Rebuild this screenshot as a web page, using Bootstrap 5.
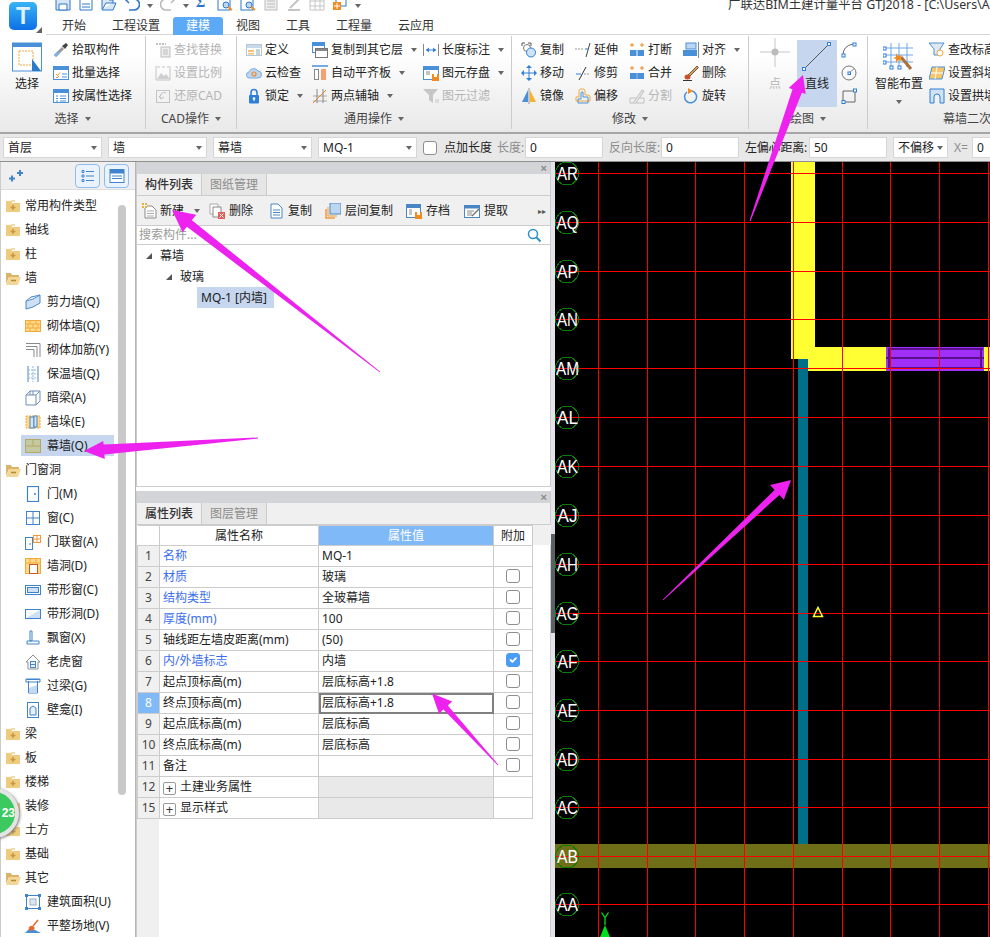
<!DOCTYPE html>
<html lang="zh-CN">
<head>
<meta charset="utf-8">
<title>广联达BIM土建计量平台 GTJ2018</title>
<link href="https://cdn.jsdelivr.net/npm/bootstrap@5.3.0/dist/css/bootstrap.min.css" rel="stylesheet">
<style>
html,body{width:990px;height:937px;overflow:hidden;margin:0;background:#fff}
body{position:relative;font:12px/16px "Noto Sans","Noto Sans CJK SC",sans-serif;color:#222}
.ic{width:16px;height:16px;flex:none;display:block}
.cdn{display:inline-block;width:0;height:0;border-left:3.5px solid transparent;border-right:3.5px solid transparent;border-top:4px solid #666;flex:none}
.gray{color:#b5b5b5}.dim{color:#8d8d8d}
/* title + tabs */
.topbar{height:35px;border-bottom:1px solid #d8d8d8}
.logo-cell{width:46px;height:35px;position:relative;background:#fff;flex:none}
.logo-cell::after{content:"";position:absolute;right:4px;bottom:2px;border:3px solid transparent;border-right-color:#666;border-bottom-color:#666}
.logo-box{width:28px;height:28px;margin:2px 0 0 9px;border-radius:5px;background:linear-gradient(#38b4f5,#0d6fe6);color:#dff1ff;font:bold 23px/28px "Liberation Sans",sans-serif;text-align:center}
.qat{height:11px;overflow:hidden;padding-left:9px;gap:7px}
.qat .ic{margin-top:-5px}
.qat-s{font:bold 14px/6px "Liberation Serif",serif;color:#2a72c8;width:14px}
.app-title{position:absolute;left:728px;top:-3px;white-space:nowrap;font-size:12.4px;color:#333}
.tabsrow{height:18px;margin-top:6px;margin-left:3px}
.rtab{padding:0 13px;line-height:18px;color:#333}
.rtab.on{background:#5caaf7;color:#fff;border-radius:3px 3px 0 0}
/* ribbon */
.ribbon{height:97px;background:linear-gradient(#fff 20%,#f3f3f3 60%,#e9e9e9);overflow:hidden}
.rg{flex:none;height:93px;margin-top:1px;border-right:1px solid #ccc;display:flex;flex-direction:column}
.rg-b{height:73px;flex:none;padding-top:2px;display:flex}
.rg-l{height:20px;flex:none;line-height:20px;display:flex;justify-content:center;align-items:center;gap:6px;color:#444}
.rcol{display:flex;flex-direction:column;flex:none}
.ri{height:23px;display:flex;align-items:center;gap:3px;white-space:nowrap}
.ri .cdn{margin-left:5px}
.big{display:flex;flex-direction:column;align-items:center;flex:none;height:68px}
.big svg{flex:none}
.big span{line-height:16px;white-space:nowrap}
.big.on-btn{background:#c5d6ee;margin-top:2px;height:67px}
.g1{width:146px}.g1>.rg-b{padding-left:11px}
.g2{width:91px}.g2>.rg-b{padding-left:9px}
.g3{width:275px}.g3>.rg-b{padding-left:9px}
.g4{width:237px}.g4>.rg-b{padding-left:9px}
.g5{width:119px}.g5>.rg-b{padding-left:11px}
.g6{width:234px;border:0}.g6>.rg-b{padding-left:7px}
.w32{width:32px}.w30{width:30px}.w40{width:40px}.w48{width:48px}
.m10{margin-left:10px}.m7{margin-left:7px}.m4{margin-left:4px}.m6{margin-left:6px}
.w66{width:66px}.w111{width:111px}.w54{width:54px}
.t2{margin-top:2px}
/* field bar */
.fieldbar{height:30px;background:#e8e8e8;border-top:2px solid #a6a6a6;border-bottom:1px solid #8f8f8f;padding-left:3px;overflow:hidden}
.fieldbar>span{flex:none;white-space:nowrap}
.form-control.fld{width:99px;height:21px;flex:none;padding:0 4px;font-size:12px;line-height:19px;border:1px solid #d6d6d6;border-radius:0;color:#222;background:#fff;min-height:0}
.fld.w78{width:78px}.fld.w55{width:55px}
.mr6{margin-right:6px}
.lab1{width:48px;margin-left:7px;margin-right:5px}
.lab2{width:28px}.lab3{width:52px}.lab4{width:64px;letter-spacing:-.2px}.lab5{width:18px}
.form-check-input.ck{width:14px;height:14px;margin:0;flex:none;border:1px solid #8e8e8e;border-radius:3px;background-color:#fff;opacity:1}
.form-check-input.ck:checked{background-color:#4a9cf5;border-color:#4a9cf5}
/* main */
.mainrow{height:775px}
.leftp{width:136px;flex:none;border-left:1px solid #ccc;border-right:1px solid #b5b5b5;position:relative}
.left-hd{height:28px;background:#efefef;border-bottom:1px solid #ddd;padding:1px 6px 0 6px}
.sq{width:25px;height:24px;border:1px solid #8dbdf0;border-radius:4px;background:#eaf3fd;display:flex;align-items:center;justify-content:center}
.tree{width:117px;padding-top:4px;overflow:hidden}
.tr0{height:24px;display:flex;align-items:center;gap:4px;padding-left:4px;white-space:nowrap}
.tr1{height:24px;display:flex;align-items:center;gap:6px;padding-left:24px;white-space:nowrap}
.tr1.sel{height:21px;margin:1px 0 2px 20px;padding-left:4px;width:93px;background:#c5d6ee}
.vscroll{width:8px;height:590px;margin-top:15px;background:#c9c9c9;border-radius:4px;flex:none}
.badge23{position:absolute;left:-32px;top:626px;width:50px;height:50px;border-radius:50%;background:#3cc95f;border:4px solid #e4e4e4;box-shadow:1px 1px 3px #777;color:#fff;font:bold 12px/42px "Liberation Sans",sans-serif;text-align:right;padding-right:0}
.midp{width:415px;flex:none}
.pn{border-left:1px solid #ccc;border-right:1px solid #ccc;background:#fff}
.pn-up{height:325px;border-bottom:1px solid #ccc;margin-bottom:4px}
.pn-dn{flex:1 1 auto;min-height:0}
.pn-x{height:12px;background:#d3d4d8;color:#888;font:bold 11px/12px "Liberation Sans",sans-serif;text-align:right;padding-right:3px;flex:none}
.ptabs{height:22px;background:#f0f0f0;border-bottom:1px solid #ccc;flex:none}
.ptab-i{width:65px;text-align:center;line-height:21px;font-weight:500;color:#333;background:#f0f0f0;border-right:1px solid #ccc}
.ptab-i.off{color:#8c8c8c;background:#e6e6e6;font-weight:400;width:65px}
.ptools{height:30px;background:#f0f0f0;border-bottom:1px solid #ccc;padding-left:5px;flex:none;position:relative}
.pt{display:flex;align-items:center;gap:4px;white-space:nowrap;flex:none}
.g2px{gap:2px}
.w67{width:67px}.w59{width:59px}.w57{width:57px}.w81{width:81px}.w58{width:58px}
.more{font-size:8px;color:#555}
.srch{height:19px;border-bottom:1px solid #ccc;padding:0 8px 0 2px;color:#9a9a9a;flex:none}
.pt-r{height:21px;display:flex;align-items:center;white-space:nowrap}
.p9{padding-left:9px}.p29{padding-left:29px}
.tri{width:0;height:0;border-left:6px solid transparent;border-bottom:6px solid #555;flex:none}
.pt-sel{margin-left:60px;padding:0 4px;width:77px;height:21px;line-height:21px;background:#c5d6ee}
.ptab.table{width:395px;margin:0;table-layout:fixed;--bs-table-border-color:#ccc;--bs-table-bg:transparent;font-size:12px;flex:none}
.ptab.table>:not(caption)>*>*{padding:0 3px;height:21px;line-height:16px;vertical-align:middle;color:#222;white-space:nowrap;box-shadow:none}
.ptab.table>thead>*>*{height:20px;text-align:center;border-top:0}
.ptab.table>*>*>.n{background:#f0f0f0;text-align:center;padding:0;color:#444}
.ptab.table>*>*>.n.act,.ptab.table>thead>*>.hv{background:#7fb9f8;color:#fff}
.ptab.table>*>*>.bl{color:#3b6ef0}
.ptab.table>*>*>.gr{background:#e9e9e9}
.ptab.table>*>*>.cur{outline:2px solid #808080;outline-offset:-2px}
.ptab.table>*>*>.ctr{text-align:center;padding:0}
.ptab.table>thead>*>.emp{border:0;background:#fff}
.cw1{width:22px}.cw2{width:159px}.cw3{width:175px}.cw4{width:39px}
.plus{display:inline-block;width:13px;height:13px;border:1px solid #999;border-radius:2px;line-height:10px;text-align:center;margin-right:4px;vertical-align:-2px;font-size:13px;color:#333}
.hd-strip{width:18px;height:20px;background:#f0f0f0;flex:none}
.gutter{width:22px;background:#f0f0f0;flex:1 1 auto}
.split{width:4px;flex:none;background:#e3e3e9;position:relative}
.split-h{position:absolute;left:0;top:372px;width:4px;height:99px;background:#5c6067}
.canvasw{width:435px;flex:none;background:#000}
.canvasw svg{display:block}
.cad-t{font:18px "Liberation Sans",sans-serif;fill:#fff}
.over{position:absolute;left:0;top:0;width:990px;height:937px;pointer-events:none}
</style>
</head>
<body>
<svg class="d-none" xmlns="http://www.w3.org/2000/svg">
<symbol id="i-save" viewBox="0 0 16 16"><path d="M1 1h12l2 2v12H1z" fill="#d7e6f7" stroke="#2f78c8"/><path d="M4 9h8v6H4z" fill="#fff" stroke="#2f78c8"/></symbol>
<symbol id="i-doc" viewBox="0 0 16 16"><path d="M2 1h8l4 4v10H2z" fill="#fff" stroke="#2f78c8"/><path d="M4 9h8M4 12h8" stroke="#2f78c8"/></symbol>
<symbol id="i-open" viewBox="0 0 16 16"><path d="M1 14V3h5l2 2h4v3H5l-4 7h11l3-7H12" fill="#d7e6f7" stroke="#2f78c8"/></symbol>
<symbol id="i-undo" viewBox="0 0 16 16"><path d="M5 8 1 4l4-4M1 4h9a5 5 0 0 1 0 11H5" fill="none" stroke="#2f78c8" stroke-width="1.6"/></symbol>
<symbol id="i-redo" viewBox="0 0 16 16"><path d="M11 8l4-4-4-4M15 4H6a5 5 0 0 0 0 11h5" fill="none" stroke="#bbb" stroke-width="1.6"/></symbol>
<symbol id="i-plan" viewBox="0 0 16 16"><rect x="1" y="1" width="12" height="14" fill="#fff" stroke="#2f78c8"/><circle cx="9" cy="10" r="3" fill="#bcd6f2" stroke="#2f78c8"/><path d="M11 12l4 3" stroke="#f09020" stroke-width="2"/></symbol>
<symbol id="i-gplan" viewBox="0 0 16 16"><rect x="2" y="1" width="12" height="14" fill="#eee" stroke="#bbb"/><path d="M4 6h8M4 9h8M4 12h8" stroke="#bbb"/></symbol>
<symbol id="i-gpen" viewBox="0 0 16 16"><path d="M2 15h12M4 13 13 4" stroke="#c4c4c4" stroke-width="2"/></symbol>
<symbol id="i-ggrid" viewBox="0 0 16 16"><path d="M1 1h14v14H1zM6 1v14M11 1v14M1 6h14M1 11h14" fill="none" stroke="#c4c4c4"/></symbol>
<symbol id="i-qadd" viewBox="0 0 16 16"><rect x="4" y="1" width="10" height="10" fill="#fff" stroke="#2f78c8"/><rect x="1" y="7" width="8" height="8" fill="#f28a1e"/><path d="M5 8v6M2 11h6" stroke="#fff"/></symbol>
<symbol id="i-pick" viewBox="0 0 16 16"><path d="M2 14 10 6" stroke="#999" stroke-width="3"/><path d="M2 14 6 10" stroke="#7cb0e6" stroke-width="3"/><path d="M9 4l3 3 3-4-2-2z" fill="#444"/></symbol>
<symbol id="i-batch" viewBox="0 0 16 16"><rect x=".5" y="1.500" width="15" height="13" fill="#fff" stroke="#4a90d9"/><rect x="1" y="2" width="14" height="3" fill="#4a90d9"/><path d="M3 9l1.500 1.500L7 7.500M3 12l1 1 2-2" fill="none" stroke="#f09020"/><path d="M9 9h5M9 12h5" stroke="#4a90d9"/></symbol>
<symbol id="i-attr" viewBox="0 0 16 16"><rect x=".5" y="1.500" width="15" height="13" fill="#fff" stroke="#4a90d9"/><rect x="1" y="2" width="14" height="3" fill="#4a90d9"/><path d="M3 8h2M3 10.500h2M3 13h2M7 8h6M7 10.500h6M7 13h6" stroke="#4a90d9"/></symbol>
<symbol id="i-find" viewBox="0 0 16 16"><path d="M1 2h10" stroke="#c0c0c0" stroke-dasharray="2 1" stroke-width="2"/><rect x="6" y="5" width="9" height="10" fill="#eee" stroke="#bdbdbd"/><path d="M8 8h5M8 10h5M8 12h5" stroke="#bdbdbd"/></symbol>
<symbol id="i-scale" viewBox="0 0 16 16"><path d="M1 1v14h14V1" fill="none" stroke="#c4c4c4"/><path d="M2 14l4-6 3 3 2-2 4 5z" fill="#cfcfcf"/><path d="M2 2h3M7 2h3M12 2h2" stroke="#c4c4c4"/></symbol>
<symbol id="i-back" viewBox="0 0 16 16"><rect x="1.500" y="2.500" width="13" height="12" fill="none" stroke="#c4c4c4"/><path d="M11 5a4 4 0 0 0-5 6M4 8l2 3 3-2" fill="none" stroke="#bdbdbd"/></symbol>
<symbol id="i-def" viewBox="0 0 16 16"><rect x=".5" y="2.500" width="15" height="11" fill="#fff" stroke="#b8c6d6"/><rect x="1" y="3" width="14" height="3" fill="#c9d9ec"/><path d="M2 8h6v2H2zM2 11h6v1.500H2z" fill="#f7c074"/><path d="M10 8h4M10 10h4M10 12h4" stroke="#8aa"/></symbol>
<symbol id="i-cloud" viewBox="0 0 16 16"><path d="M4 13a3 3 0 0 1-1-6 5 5 0 0 1 9-1 3.500 3.500 0 0 1 0 7z" fill="#bcd6f2" stroke="#7aa9da"/><circle cx="8" cy="9" r="2" fill="none" stroke="#ef8a22" stroke-width="1.200"/></symbol>
<symbol id="i-lock" viewBox="0 0 16 16"><path d="M5 7V4.500a3 3 0 0 1 6 0V7" fill="none" stroke="#2f7fd6" stroke-width="1.600"/><rect x="3" y="7" width="10" height="8.500" rx="1" fill="#2f7fd6"/><circle cx="8" cy="10.500" r="1.300" fill="#fff"/><path d="M8 11v2" stroke="#fff"/></symbol>
<symbol id="i-copyfl" viewBox="0 0 16 16"><rect x=".5" y=".5" width="12" height="10" fill="#fff" stroke="#4a90d9"/><rect x="1" y="1" width="11" height="3" fill="#4a90d9"/><rect x="3.500" y="6.500" width="12" height="9" fill="#fff" stroke="#777"/><rect x="4" y="7" width="11" height="2" fill="#888"/></symbol>
<symbol id="i-auto" viewBox="0 0 16 16"><path d="M0 1h16" stroke="#4a90d9" stroke-width="1.500"/><rect x="2.500" y="4.500" width="4" height="10" fill="#fff" stroke="#888"/><rect x="9" y="4" width="5" height="11" fill="#f6a070"/></symbol>
<symbol id="i-two" viewBox="0 0 16 16"><path d="M1 8h14M1 13h14" stroke="#aaa"/><path d="M1 15 14 2" stroke="#ef8a22"/><path d="M5 1v14M11 1v14" stroke="#888"/></symbol>
<symbol id="i-dim" viewBox="0 0 16 16"><path d="M.5 2v12M15.500 2v12" stroke="#888"/><path d="M3 8h10" stroke="#2f7fd6"/><path d="M3 8l3-2.500v5zM13 8l-3-2.500v5z" fill="#2f7fd6"/></symbol>
<symbol id="i-store" viewBox="0 0 16 16"><rect x=".5" y="1.500" width="15" height="13" fill="#fff" stroke="#4a90d9"/><rect x="1" y="2" width="14" height="3" fill="#4a90d9"/><path d="M3 7h4M3 9h4" stroke="#888"/><rect x="9" y="9" width="7" height="7" fill="#f28a1e"/><rect x="11" y="9" width="3" height="3" fill="#fff"/></symbol>
<symbol id="i-filter" viewBox="0 0 16 16"><path d="M0 1h15l-5 6v8l-4-3V7z" fill="#c6c6c6"/><path d="M12 12h4M12 14h4" stroke="#c6c6c6"/></symbol>
<symbol id="i-copy" viewBox="0 0 16 16"><path d="M1 4V1h3M7 1h3v3" fill="none" stroke="#555"/><circle cx="6" cy="6" r="3.500" fill="#fff" stroke="#777"/><circle cx="10" cy="10.500" r="4.500" fill="#cfe2f6" stroke="#2f7fd6"/></symbol>
<symbol id="i-move" viewBox="0 0 16 16"><path d="M8 3v10M3 8h10" stroke="#2f7fd6"/><path d="M8 0l3 3H5zM8 16l3-3H5zM0 8l3-3v6zM16 8l-3-3v6z" fill="#2f7fd6"/></symbol>
<symbol id="i-mirror" viewBox="0 0 16 16"><path d="M7 2v12H1z" fill="#4a90d9"/><path d="M9 2v12h6z" fill="#f7b32b"/><path d="M8 0v16" stroke="#999"/></symbol>
<symbol id="i-extend" viewBox="0 0 16 16"><path d="M0 7h9" stroke="#999" stroke-dasharray="2 1"/><path d="M10 7h3" stroke="#2f7fd6"/><path d="M11 15 15 1" stroke="#444"/></symbol>
<symbol id="i-trim" viewBox="0 0 16 16"><path d="M1 9h5" stroke="#2f7fd6"/><path d="M9 9h6" stroke="#999" stroke-dasharray="2 1"/><path d="M4 15 11 2" stroke="#333"/></symbol>
<symbol id="i-offset" viewBox="0 0 16 16"><path d="M1 13V9h3V3a2 2 0 0 1 2-2h2a2 2 0 0 1 2 2v4h3a2 2 0 0 1 2 2v4z" fill="none" stroke="#f2a93b"/><path d="M3 15v-4h3V5a1 1 0 0 1 1-1h1v5h5v6z" fill="none" stroke="#4a90d9"/></symbol>
<symbol id="i-break" viewBox="0 0 16 16"><rect x="1" y="8" width="6.500" height="6" fill="#4a90d9"/><rect x="8.500" y="8" width="6.500" height="6" fill="#4a90d9"/><path d="M1 3h4M3 1v4M11 3h4M13 1v4" stroke="#f28a1e"/></symbol>
<symbol id="i-merge" viewBox="0 0 16 16"><rect x="1" y="8" width="14" height="6" fill="#4a90d9"/><path d="M8 8v6" stroke="#8ebceb"/><path d="M1 3h4M3 1v4M11 3h4M13 1v4" stroke="#f28a1e"/></symbol>
<symbol id="i-split" viewBox="0 0 16 16"><path d="M1 10h14v5H1z" fill="none" stroke="#c0c0c0"/><path d="M4 15 13 2l2 1-8 12" fill="#e4e4e4" stroke="#c0c0c0"/></symbol>
<symbol id="i-align" viewBox="0 0 16 16"><rect x="3" y="1" width="10" height="6" fill="#bcd6f2" stroke="#4a90d9"/><rect x="0" y="8" width="14" height="6" fill="#4a90d9"/><path d="M15.500 0v16" stroke="#888"/></symbol>
<symbol id="i-del" viewBox="0 0 16 16"><path d="M5 10 14 1l1.500 1.500-9 9z" fill="#c8a06a" stroke="#7d5a2c"/><ellipse cx="4.500" cy="12" rx="3" ry="2.500" fill="#c8502a"/><path d="M0 15.500h9" stroke="#333"/></symbol>
<symbol id="i-rot" viewBox="0 0 16 16"><path d="M9 3a6 6 0 1 1-5 1" fill="none" stroke="#4a90d9" stroke-width="1.500"/><path d="M5 0l5 3-5 3z" fill="#f28a1e"/></symbol>
<symbol id="i-point" viewBox="0 0 30 30"><path d="M0 14h12M18 14h12M15 0v11M15 17v12" stroke="#c6c6c6"/><circle cx="15" cy="14" r="3.500" fill="#bbb"/></symbol>
<symbol id="i-line" viewBox="0 0 30 30"><path d="M2 27 27 2" stroke="#555"/><rect x=".5" y="25.500" width="3" height="3" fill="#fff" stroke="#2f7fd6"/><rect x="25.500" y=".5" width="3" height="3" fill="#fff" stroke="#2f7fd6"/></symbol>
<symbol id="i-arc" viewBox="0 0 16 16"><path d="M2 13Q2 4 12 2" fill="none" stroke="#666"/><rect x="1" y="12" width="3" height="3" fill="#fff" stroke="#2f7fd6"/><rect x="12" y="1" width="3" height="3" fill="#fff" stroke="#2f7fd6"/></symbol>
<symbol id="i-circ" viewBox="0 0 16 16"><circle cx="8" cy="8" r="7" fill="none" stroke="#777"/><rect x="7" y="7" width="2.500" height="2.500" fill="#fff" stroke="#2f7fd6"/><path d="M9 7l4-3" stroke="#999"/></symbol>
<symbol id="i-rect" viewBox="0 0 16 16"><path d="M2 3h12v11H2z" fill="none" stroke="#666"/><rect x="1" y="12.500" width="3" height="3" fill="#fff" stroke="#2f7fd6"/><rect x="12.500" y="1" width="3" height="3" fill="#fff" stroke="#2f7fd6"/></symbol>
<symbol id="i-smart" viewBox="0 0 32 32"><path d="M8 1v24M16 1v24M24 1v24M1 6h29M1 13h29M1 20h29" stroke="#6ea6e2"/><g fill="#fff" stroke="#2f7fd6"><rect x="0" y="5" width="3" height="3"/><rect x="0" y="12" width="3" height="3"/><rect x="0" y="19" width="3" height="3"/><rect x="7" y="24" width="3" height="3"/><rect x="15" y="24" width="3" height="3"/></g><path d="M18 15 28 27" stroke="#a9713b" stroke-width="3"/><path d="M13 11l2 3 4-1-2 3 2 3-4-1-2 3v-4l-3-1 3-1z" fill="#f28a1e"/></symbol>
<symbol id="i-modh" viewBox="0 0 16 16"><path d="M0 1h15l-4 6v6H5V7z" fill="#e0e7ef" stroke="#4a90d9"/><circle cx="11" cy="11" r="3" fill="#fff" stroke="#f2a93b"/></symbol>
<symbol id="i-slope" viewBox="0 0 16 16"><path d="M3 2h13l-3 12H0z" fill="#f7c668" stroke="#4a90d9"/><path d="M2 8h12M8 2 6 14" stroke="#fff"/></symbol>
<symbol id="i-arch" viewBox="0 0 16 16"><path d="M1 1h14v14h-4V9a3 3 0 0 0-6 0v6H1z" fill="#cfe2f6" stroke="#2f7fd6"/></symbol>
<symbol id="i-spark" viewBox="0 0 16 16"><path d="M2 10.500h6M5 7.500v6M10 5h6M13 2v6" stroke="#3f83cc" stroke-width="2"/></symbol>
<symbol id="i-fold" viewBox="0 0 16 16"><path d="M1 3h5l1 2h8v9H1z" fill="#eecb7e"/><rect x="6" y="2" width="4" height="2" fill="#f5dca6"/><path d="M8 7v5M5.500 9.500h5" stroke="#c69a3e" stroke-width="1.500"/></symbol>
<symbol id="i-foldo" viewBox="0 0 16 16"><path d="M1 3h5l1 2h7v2H4L1 14z" fill="#d9b56a"/><path d="M4 7h12l-3 8H1z" fill="#f2d798"/><path d="M6 10.500h5" stroke="#b58b37" stroke-width="1.500"/></symbol>
<symbol id="i-shear" viewBox="0 0 16 16"><path d="M1 7Q8 6 15 1v8Q8 14 1 15z" fill="#cfe0f4" stroke="#4a86c6"/><path d="M1 7 6 3q5-1 9-2" fill="#eef4fb" stroke="#4a86c6"/></symbol>
<symbol id="i-brick" viewBox="0 0 16 16"><rect x=".5" y="2.500" width="15" height="11" fill="#ffd98a" stroke="#f2a93b"/><path d="M1 6h14M1 10h14M5 3v3M11 3v3M8 6v4M3 6v4M13 6v4M5 10v3M11 10v3" stroke="#f2a93b"/></symbol>
<symbol id="i-rebar" viewBox="0 0 16 16"><path d="M1 1.500h14V15M1 4.500h11V15M1 7.500h8V15" fill="none" stroke="#8a8a8a"/></symbol>
<symbol id="i-insul" viewBox="0 0 16 16"><path d="M3 0v16M13 0v16" stroke="#4a86c6"/><path d="M8 0v16M3 4h10M3 8h10M3 12h10" stroke="#8db4dd" stroke-dasharray="2 1"/></symbol>
<symbol id="i-beam" viewBox="0 0 16 16"><path d="M1 5 5 1h10v10l-4 4H1z" fill="#fff" stroke="#6f8fb4"/><path d="M1 5h10v10M11 5l4-4M5 1v4M8 1v4" fill="none" stroke="#6f8fb4"/></symbol>
<symbol id="i-pier" viewBox="0 0 16 16"><rect x="1" y="2" width="14" height="12" fill="#ffd98a" stroke="#f2a93b" stroke-dasharray="2 1"/><rect x="5" y="3" width="4" height="11" fill="#d6e4f4" stroke="#4a86c6"/><rect x="9" y="2" width="3" height="11" fill="#d6e4f4" stroke="#4a86c6"/></symbol>
<symbol id="i-curt" viewBox="0 0 16 16"><rect x=".5" y="1.500" width="15" height="13" fill="#c4c9a2" stroke="#b7a765"/><path d="M8 2v6M1 8h14" stroke="#b7a765"/></symbol>
<symbol id="i-door" viewBox="0 0 16 16"><rect x="2.500" y=".5" width="11" height="15" fill="#fff" stroke="#3f83cc" stroke-width="1.200"/><path d="M10 7v2" stroke="#3f83cc" stroke-width="1.500"/></symbol>
<symbol id="i-wind" viewBox="0 0 16 16"><rect x="1.500" y="1.500" width="13" height="13" fill="#fff" stroke="#3f83cc"/><path d="M8 2v12M2 8h12" stroke="#3f83cc"/></symbol>
<symbol id="i-dwin" viewBox="0 0 16 16"><rect x=".5" y="3.500" width="7" height="12" fill="#fff" stroke="#3f83cc"/><rect x="8.500" y="1.500" width="7" height="7" fill="#fff" stroke="#f09a3a"/><path d="M5 9v2" stroke="#3f83cc"/><path d="M12 2v6M9 5h6" stroke="#f09a3a"/></symbol>
<symbol id="i-hole" viewBox="0 0 16 16"><rect x=".5" y=".5" width="15" height="15" fill="#ffd98a" stroke="#f2a93b"/><path d="M1 5h14M5 1v4M11 1v4" stroke="#f2a93b"/><rect x="4.500" y="6.500" width="8" height="9" fill="#fff" stroke="#c05a2c"/></symbol>
<symbol id="i-strip" viewBox="0 0 16 16"><rect x=".5" y="3.500" width="15" height="9" fill="#fff" stroke="#3f83cc"/><rect x="2.500" y="5.500" width="11" height="5" fill="#cfe0f4" stroke="#3f83cc"/></symbol>
<symbol id="i-striph" viewBox="0 0 16 16"><rect x=".5" y="3.500" width="15" height="9" fill="#fff" stroke="#3f83cc"/><path d="M1 12 15 4v8z" fill="#cfe0f4"/></symbol>
<symbol id="i-bay" viewBox="0 0 16 16"><path d="M5 1h2v10H5zM2 11h12v3H2z" fill="#fff" stroke="#3f83cc"/></symbol>
<symbol id="i-dorm" viewBox="0 0 16 16"><path d="M8 1 1 8h2v7h10V8h2z" fill="#fff" stroke="#8a8f94"/><rect x="5.500" y="7.500" width="5" height="6" fill="#e6eff9" stroke="#4a86c6"/><path d="M6 10.500h4" stroke="#4a86c6"/></symbol>
<symbol id="i-lint" viewBox="0 0 16 16"><path d="M1.500 1.500h13M3.500 3v12h9V3" fill="#fff" stroke="#3f83cc"/><path d="M1 1h14v3H1z" fill="none" stroke="#3f83cc"/><path d="M4 15V10l8-3v8z" fill="#c4d8ee"/></symbol>
<symbol id="i-niche" viewBox="0 0 16 16"><rect x="2.500" y=".5" width="11" height="15" fill="#fff" stroke="#3f83cc"/><path d="M5 13V6l3-2 3 2v7z" fill="#e6eff9" stroke="#3f83cc"/></symbol>
<symbol id="i-area" viewBox="0 0 16 16"><rect x="1.500" y="1.500" width="13" height="13" fill="#fff" stroke="#3f83cc"/><rect x="5" y="5" width="6" height="6" fill="#dde6f0" stroke="#9db1c7"/><g fill="#3f83cc"><rect x="0" y="0" width="3" height="3"/><rect x="13" y="0" width="3" height="3"/><rect x="0" y="13" width="3" height="3"/><rect x="13" y="13" width="3" height="3"/></g></symbol>
<symbol id="i-grade" viewBox="0 0 16 16"><path d="M0 15 5 10l5 2 6 3z" fill="#4a8ed6"/><path d="M4 12a3 3 0 0 1 4-4l2 2-3 3z" fill="#e8672a"/><path d="M8 8 13 2" stroke="#e8672a" stroke-width="1.500"/></symbol>
<symbol id="i-new" viewBox="0 0 16 16"><path d="M3 3h7l4 4v8H3z" fill="#fff" stroke="#8a8a8a"/><path d="M5 8h7M5 10.500h7M5 13h7" stroke="#aaa"/><rect x="0" y="0" width="5" height="5" fill="#f2a93b"/><path d="M0 2.500h5M2.500 0v5" stroke="#fff"/></symbol>
<symbol id="i-rem" viewBox="0 0 16 16"><path d="M1 1h8v10H1z" fill="#fff" stroke="#aaa"/><path d="M4 4h8v10H4z" fill="#fff" stroke="#888"/><rect x="9" y="9" width="7" height="7" fill="#e25d58"/><path d="M10.500 10.500l4 4M14.500 10.500l-4 4" stroke="#fff"/></symbol>
<symbol id="i-dup" viewBox="0 0 16 16"><path d="M3 1h7l4 4v10H3z" fill="#fff" stroke="#4a86c6"/><path d="M5 7h7M5 9.500h7M5 12h7" stroke="#4a86c6"/></symbol>
<symbol id="i-layer" viewBox="0 0 16 16"><path d="M1 6v9h9" fill="none" stroke="#f09a3a" stroke-width="1.500"/><path d="M3 4v9h9" fill="none" stroke="#f09a3a"/><rect x="5" y="0" width="11" height="11" fill="#bcd6f2" stroke="#4a86c6"/></symbol>
<symbol id="i-arch2" viewBox="0 0 16 16"><rect x=".5" y="1.500" width="14" height="13" fill="#fff" stroke="#4a86c6"/><rect x="1" y="2" width="13" height="3" fill="#4a86c6"/><path d="M3 7h3M3 9h3M3 11h3" stroke="#8a8a8a"/><rect x="9" y="9" width="7" height="7" fill="#f28a1e"/><rect x="11" y="9" width="3" height="3" fill="#fff"/></symbol>
<symbol id="i-extr" viewBox="0 0 16 16"><rect x=".5" y="2.500" width="15" height="12" fill="#fff" stroke="#4a86c6"/><rect x="1" y="3" width="14" height="2.500" fill="#4a86c6"/><path d="M3 8h7M3 10h5M3 12h5" stroke="#8a8a8a"/><path d="M8 13 15 6" stroke="#777" stroke-width="1.500"/></symbol>
<symbol id="i-mag" viewBox="0 0 16 16"><circle cx="7" cy="7" r="4.500" fill="none" stroke="#2f8fc8" stroke-width="1.500"/><path d="M10.500 10.500l4 4" stroke="#2f8fc8" stroke-width="2"/></symbol>
<symbol id="i-list" viewBox="0 0 16 16"><path d="M2 2.500h2v2H2zM2 7h2v2H2zM2 11.500h2v2H2zM6 3.500h8M6 8h8M6 12.500h8" fill="none" stroke="#3f83cc"/></symbol>
<symbol id="i-panel" viewBox="0 0 16 16"><rect x="1" y="1.500" width="14" height="13" fill="#fff" stroke="#3f83cc"/><rect x="1" y="1.500" width="14" height="4" fill="#3f83cc"/><path d="M3 8h10M3 10.500h10" stroke="#3f83cc"/></symbol>
</svg>

<div class="topbar d-flex">
  <div class="logo-cell"><div class="logo-box">T</div></div>
  <div class="flex-grow-1">
    <div class="qat d-flex">
      <svg class="ic"><use href="#i-save"/></svg><svg class="ic"><use href="#i-doc"/></svg><svg class="ic"><use href="#i-open"/></svg><svg class="ic"><use href="#i-undo"/></svg><span class="cdn mt-1"></span><svg class="ic"><use href="#i-redo"/></svg><span class="cdn mt-1"></span><span class="qat-s">Σ</span><svg class="ic"><use href="#i-plan"/></svg><svg class="ic"><use href="#i-plan"/></svg><svg class="ic"><use href="#i-gplan"/></svg><svg class="ic"><use href="#i-gpen"/></svg><svg class="ic"><use href="#i-ggrid"/></svg><svg class="ic"><use href="#i-qadd"/></svg><span class="cdn mt-1"></span>
    </div>
    <div class="tabsrow d-flex">
      <div class="rtab">开始</div><div class="rtab">工程设置</div><div class="rtab on">建模</div><div class="rtab">视图</div><div class="rtab">工具</div><div class="rtab">工程量</div><div class="rtab">云应用</div>
    </div>
  </div>
  <div class="app-title">广联达BIM土建计量平台 GTJ2018 - [C:\Users\A</div>
</div>

<div class="ribbon d-flex">
  <div class="rg g1">
    <div class="rg-b">
      <div class="big w32"><svg width="30" height="30" viewBox="0 0 30 30" class="mt-1"><rect x=".5" y="1" width="29" height="28" fill="#fff" stroke="#4a90d9"/><rect x="1" y="1" width="28" height="4" fill="#4a90d9"/><path d="M7 9h14v14H7z" fill="none" stroke="#f2a93b" stroke-dasharray="2 1"/><path d="M20 17v12h9z" fill="#2b7bc8"/></svg><span class="mt-1">选择</span></div>
      <div class="rcol m10">
        <div class="ri"><svg class="ic"><use href="#i-pick"/></svg>拾取构件</div>
        <div class="ri"><svg class="ic"><use href="#i-batch"/></svg>批量选择</div>
        <div class="ri"><svg class="ic"><use href="#i-attr"/></svg>按属性选择</div>
      </div>
    </div>
    <div class="rg-l">选择<span class="cdn"></span></div>
  </div>
  <div class="rg g2">
    <div class="rg-b"><div class="rcol gray">
      <div class="ri"><svg class="ic"><use href="#i-find"/></svg>查找替换</div>
      <div class="ri"><svg class="ic"><use href="#i-scale"/></svg>设置比例</div>
      <div class="ri"><svg class="ic"><use href="#i-back"/></svg>还原CAD</div>
    </div></div>
    <div class="rg-l">CAD操作<span class="cdn"></span></div>
  </div>
  <div class="rg g3">
    <div class="rg-b">
      <div class="rcol w66">
        <div class="ri"><svg class="ic"><use href="#i-def"/></svg>定义</div>
        <div class="ri"><svg class="ic"><use href="#i-cloud"/></svg>云检查</div>
        <div class="ri"><svg class="ic"><use href="#i-lock"/></svg>锁定<span class="cdn"></span></div>
      </div>
      <div class="rcol w111">
        <div class="ri"><svg class="ic"><use href="#i-copyfl"/></svg>复制到其它层<span class="cdn"></span></div>
        <div class="ri"><svg class="ic"><use href="#i-auto"/></svg>自动平齐板<span class="cdn"></span></div>
        <div class="ri"><svg class="ic"><use href="#i-two"/></svg>两点辅轴<span class="cdn"></span></div>
      </div>
      <div class="rcol">
        <div class="ri"><svg class="ic"><use href="#i-dim"/></svg>长度标注<span class="cdn"></span></div>
        <div class="ri"><svg class="ic"><use href="#i-store"/></svg>图元存盘<span class="cdn"></span></div>
        <div class="ri gray"><svg class="ic"><use href="#i-filter"/></svg>图元过滤</div>
      </div>
    </div>
    <div class="rg-l">通用操作<span class="cdn"></span></div>
  </div>
  <div class="rg g4">
    <div class="rg-b">
      <div class="rcol w54">
        <div class="ri"><svg class="ic"><use href="#i-copy"/></svg>复制</div>
        <div class="ri"><svg class="ic"><use href="#i-move"/></svg>移动</div>
        <div class="ri"><svg class="ic"><use href="#i-mirror"/></svg>镜像</div>
      </div>
      <div class="rcol w54">
        <div class="ri"><svg class="ic"><use href="#i-extend"/></svg>延伸</div>
        <div class="ri"><svg class="ic"><use href="#i-trim"/></svg>修剪</div>
        <div class="ri"><svg class="ic"><use href="#i-offset"/></svg>偏移</div>
      </div>
      <div class="rcol w54">
        <div class="ri"><svg class="ic"><use href="#i-break"/></svg>打断</div>
        <div class="ri"><svg class="ic"><use href="#i-merge"/></svg>合并</div>
        <div class="ri gray"><svg class="ic"><use href="#i-split"/></svg>分割</div>
      </div>
      <div class="rcol">
        <div class="ri"><svg class="ic"><use href="#i-align"/></svg>对齐<span class="cdn"></span></div>
        <div class="ri"><svg class="ic"><use href="#i-del"/></svg>删除</div>
        <div class="ri"><svg class="ic"><use href="#i-rot"/></svg>旋转</div>
      </div>
    </div>
    <div class="rg-l">修改<span class="cdn"></span></div>
  </div>
  <div class="rg g5">
    <div class="rg-b">
      <div class="big w30 gray"><svg width="30" height="30"><use href="#i-point"/></svg><span class="mt-2">点</span></div>
      <div class="big w40 m7 on-btn"><svg width="30" height="30" class="t2"><use href="#i-line"/></svg><span class="mt-1">直线</span></div>
      <div class="rcol m4">
        <div class="ri"><svg class="ic"><use href="#i-arc"/></svg></div>
        <div class="ri"><svg class="ic"><use href="#i-circ"/></svg></div>
        <div class="ri"><svg class="ic"><use href="#i-rect"/></svg></div>
      </div>
    </div>
    <div class="rg-l">绘图<span class="cdn"></span></div>
  </div>
  <div class="rg g6">
    <div class="rg-b">
      <div class="big w48"><svg width="32" height="32" viewBox="0 0 32 32" class="mt-1"><use href="#i-smart"/></svg><span class="t2">智能布置</span><span class="cdn mt-2"></span></div>
      <div class="rcol m6">
        <div class="ri"><svg class="ic"><use href="#i-modh"/></svg>查改标高</div>
        <div class="ri"><svg class="ic"><use href="#i-slope"/></svg>设置斜墙</div>
        <div class="ri"><svg class="ic"><use href="#i-arch"/></svg>设置拱墙</div>
      </div>
    </div>
    <div class="rg-l">幕墙二次编辑<span class="cdn"></span></div>
  </div>
</div>

<div class="fieldbar d-flex align-items-center">
  <div class="form-control fld d-flex justify-content-between align-items-center mr6">首层<span class="cdn"></span></div>
  <div class="form-control fld d-flex justify-content-between align-items-center mr6">墙<span class="cdn"></span></div>
  <div class="form-control fld d-flex justify-content-between align-items-center mr6">幕墙<span class="cdn"></span></div>
  <div class="form-control fld d-flex justify-content-between align-items-center mr6">MQ-1<span class="cdn"></span></div>
  <input class="form-check-input ck" type="checkbox" aria-label="点加长度">
  <span class="lab1">点加长度</span>
  <span class="dim lab2">长度:</span>
  <input class="form-control fld w78 mr6" value="0" readonly>
  <span class="dim lab3">反向长度:</span>
  <input class="form-control fld w78 mr6" value="0" readonly>
  <span class="lab4">左偏心距离:</span>
  <input class="form-control fld w78 mr6" value="50" readonly>
  <div class="form-control fld w55 d-flex justify-content-between align-items-center mr6">不偏移<span class="cdn"></span></div>
  <span class="dim lab5">X=</span>
  <input class="form-control fld w55" value="0" readonly>
</div>

<div class="mainrow d-flex">
  <div class="leftp">
    <div class="left-hd d-flex align-items-center gap-1">
      <svg class="ic me-auto"><use href="#i-spark"/></svg>
      <div class="sq"><svg class="ic"><use href="#i-list"/></svg></div>
      <div class="sq"><svg class="ic"><use href="#i-panel"/></svg></div>
    </div>
    <div class="d-flex">
      <div class="tree">
        <div class="tr0"><svg class="ic"><use href="#i-fold"/></svg>常用构件类型</div>
        <div class="tr0"><svg class="ic"><use href="#i-fold"/></svg>轴线</div>
        <div class="tr0"><svg class="ic"><use href="#i-fold"/></svg>柱</div>
        <div class="tr0"><svg class="ic"><use href="#i-foldo"/></svg>墙</div>
        <div class="tr1"><svg class="ic"><use href="#i-shear"/></svg>剪力墙(Q)</div>
        <div class="tr1"><svg class="ic"><use href="#i-brick"/></svg>砌体墙(Q)</div>
        <div class="tr1"><svg class="ic"><use href="#i-rebar"/></svg>砌体加筋(Y)</div>
        <div class="tr1"><svg class="ic"><use href="#i-insul"/></svg>保温墙(Q)</div>
        <div class="tr1"><svg class="ic"><use href="#i-beam"/></svg>暗梁(A)</div>
        <div class="tr1"><svg class="ic"><use href="#i-pier"/></svg>墙垛(E)</div>
        <div class="tr1 sel"><svg class="ic"><use href="#i-curt"/></svg>幕墙(Q)</div>
        <div class="tr0"><svg class="ic"><use href="#i-foldo"/></svg>门窗洞</div>
        <div class="tr1"><svg class="ic"><use href="#i-door"/></svg>门(M)</div>
        <div class="tr1"><svg class="ic"><use href="#i-wind"/></svg>窗(C)</div>
        <div class="tr1"><svg class="ic"><use href="#i-dwin"/></svg>门联窗(A)</div>
        <div class="tr1"><svg class="ic"><use href="#i-hole"/></svg>墙洞(D)</div>
        <div class="tr1"><svg class="ic"><use href="#i-strip"/></svg>带形窗(C)</div>
        <div class="tr1"><svg class="ic"><use href="#i-striph"/></svg>带形洞(D)</div>
        <div class="tr1"><svg class="ic"><use href="#i-bay"/></svg>飘窗(X)</div>
        <div class="tr1"><svg class="ic"><use href="#i-dorm"/></svg>老虎窗</div>
        <div class="tr1"><svg class="ic"><use href="#i-lint"/></svg>过梁(G)</div>
        <div class="tr1"><svg class="ic"><use href="#i-niche"/></svg>壁龛(I)</div>
        <div class="tr0"><svg class="ic"><use href="#i-fold"/></svg>梁</div>
        <div class="tr0"><svg class="ic"><use href="#i-fold"/></svg>板</div>
        <div class="tr0"><svg class="ic"><use href="#i-fold"/></svg>楼梯</div>
        <div class="tr0"><svg class="ic"><use href="#i-fold"/></svg>装修</div>
        <div class="tr0"><svg class="ic"><use href="#i-fold"/></svg>土方</div>
        <div class="tr0"><svg class="ic"><use href="#i-fold"/></svg>基础</div>
        <div class="tr0"><svg class="ic"><use href="#i-foldo"/></svg>其它</div>
        <div class="tr1"><svg class="ic"><use href="#i-area"/></svg>建筑面积(U)</div>
        <div class="tr1"><svg class="ic"><use href="#i-grade"/></svg>平整场地(V)</div>
      </div>
      <div class="vscroll"></div>
    </div>
    <div class="badge23">23</div>
  </div>

  <div class="midp d-flex flex-column">
    <div class="pn pn-up d-flex flex-column">
      <div class="pn-x">×</div>
      <div class="ptabs d-flex"><div class="ptab-i">构件列表</div><div class="ptab-i off">图纸管理</div></div>
      <div class="ptools d-flex align-items-center">
        <div class="pt w67 g2px"><svg class="ic"><use href="#i-new"/></svg><span>新建</span><span class="cdn ms-2"></span></div>
        <div class="pt w59"><svg class="ic"><use href="#i-rem"/></svg>删除</div>
        <div class="pt w57"><svg class="ic"><use href="#i-dup"/></svg>复制</div>
        <div class="pt w81"><svg class="ic"><use href="#i-layer"/></svg>层间复制</div>
        <div class="pt w58"><svg class="ic"><use href="#i-arch2"/></svg>存档</div>
        <div class="pt"><svg class="ic"><use href="#i-extr"/></svg>提取</div>
        <span class="ms-auto me-1 more">▸▸</span>
      </div>
      <div class="srch d-flex align-items-center justify-content-between">搜索构件...<svg class="ic"><use href="#i-mag"/></svg></div>
      <div>
        <div class="pt-r p9"><span class="tri me-2"></span>幕墙</div>
        <div class="pt-r p29"><span class="tri me-2"></span>玻璃</div>
        <div class="pt-sel">MQ-1 [内墙]</div>
      </div>
    </div>
    <div class="pn pn-dn d-flex flex-column">
      <div class="pn-x">×</div>
      <div class="ptabs d-flex"><div class="ptab-i">属性列表</div><div class="ptab-i off">图层管理</div></div>
      <div class="d-flex">
        <table class="table table-bordered ptab">
          <colgroup><col class="cw1"><col class="cw2"><col class="cw3"><col class="cw4"></colgroup>
          <thead><tr><th class="emp fw-normal"></th><th class="fw-normal">属性名称</th><th class="hv fw-normal">属性值</th><th class="fw-normal">附加</th></tr></thead>
          <tbody>
            <tr><td class="n">1</td><td class="bl">名称</td><td>MQ-1</td><td></td></tr>
            <tr><td class="n">2</td><td class="bl">材质</td><td>玻璃</td><td class="ctr"><input class="form-check-input ck" type="checkbox" aria-label="附加"></td></tr>
            <tr><td class="n">3</td><td class="bl">结构类型</td><td>全玻幕墙</td><td class="ctr"><input class="form-check-input ck" type="checkbox" aria-label="附加"></td></tr>
            <tr><td class="n">4</td><td class="bl">厚度(mm)</td><td>100</td><td class="ctr"><input class="form-check-input ck" type="checkbox" aria-label="附加"></td></tr>
            <tr><td class="n">5</td><td>轴线距左墙皮距离(mm)</td><td>(50)</td><td class="ctr"><input class="form-check-input ck" type="checkbox" aria-label="附加"></td></tr>
            <tr><td class="n">6</td><td class="bl">内/外墙标志</td><td>内墙</td><td class="ctr"><input class="form-check-input ck" type="checkbox" checked aria-label="附加"></td></tr>
            <tr><td class="n">7</td><td>起点顶标高(m)</td><td>层底标高+1.8</td><td class="ctr"><input class="form-check-input ck" type="checkbox" aria-label="附加"></td></tr>
            <tr><td class="n act">8</td><td>终点顶标高(m)</td><td class="cur">层底标高+1.8</td><td class="ctr"><input class="form-check-input ck" type="checkbox" aria-label="附加"></td></tr>
            <tr><td class="n">9</td><td>起点底标高(m)</td><td>层底标高</td><td class="ctr"><input class="form-check-input ck" type="checkbox" aria-label="附加"></td></tr>
            <tr><td class="n">10</td><td>终点底标高(m)</td><td>层底标高</td><td class="ctr"><input class="form-check-input ck" type="checkbox" aria-label="附加"></td></tr>
            <tr><td class="n">11</td><td>备注</td><td></td><td class="ctr"><input class="form-check-input ck" type="checkbox" aria-label="附加"></td></tr>
            <tr><td class="n">12</td><td><span class="plus">+</span>土建业务属性</td><td class="gr"></td><td></td></tr>
            <tr><td class="n">15</td><td><span class="plus">+</span>显示样式</td><td class="gr"></td><td></td></tr>
          </tbody>
        </table>
        <div class="hd-strip"></div>
      </div>
      <div class="gutter"></div>
    </div>
  </div>

  <div class="split"><div class="split-h"></div></div>

  <div class="canvasw">
    <svg width="435" height="775" viewBox="555 162 435 775" xmlns="http://www.w3.org/2000/svg" shape-rendering="crispEdges">
      <rect x="791" y="162" width="24" height="197" fill="#ffff33"/>
      <rect x="803" y="347" width="187" height="24" fill="#ffff33"/>
      <rect x="791" y="347" width="24" height="12" fill="#ffff33"/>
      <rect x="798" y="359" width="10" height="485" fill="#007088"/>
      <rect x="886" y="347" width="98" height="24" fill="#a030f8"/>
      <path d="M888 349h95M888 368h95M886 358h98M889 349v20M981 349v20" fill="none" stroke="#5a108e" stroke-width="2"/>
      <rect x="555" y="844" width="435" height="24" fill="#6f6f18"/>
      <g stroke="#ff0000" stroke-width="1">
        <path d="M598.500 162V937M647.500 162V937M695.500 162V937M744.500 162V937M793.500 162V937M842.500 162V937M890.500 162V937M939.500 162V937M988.500 162V937"/>
        <path d="M555 173.500H990M555 222.500H990M555 271.500H990M555 319.500H990M555 368.500H990M555 417.500H990M555 466.500H990M555 515.500H990M555 564.500H990M555 613.500H990M555 661.500H990M555 710.500H990M555 759.500H990M555 807.500H990M555 856.500H990M555 904.500H990"/>
      </g>
      <g fill="none" stroke="#0a7a0a" stroke-width="1">
        <circle cx="567" cy="173.500" r="11.500"/><circle cx="567" cy="222.500" r="11.500"/><circle cx="567" cy="271.500" r="11.500"/><circle cx="567" cy="319.500" r="11.500"/><circle cx="567" cy="368.500" r="11.500"/><circle cx="567" cy="417.500" r="11.500"/><circle cx="567" cy="466.500" r="11.500"/><circle cx="567" cy="515.500" r="11.500"/><circle cx="567" cy="564.500" r="11.500"/><circle cx="567" cy="613.500" r="11.500"/><circle cx="567" cy="661.500" r="11.500"/><circle cx="567" cy="710.500" r="11.500"/><circle cx="567" cy="759.500" r="11.500"/><circle cx="567" cy="807.500" r="11.500"/><circle cx="567" cy="856.500" r="11.500"/><circle cx="567" cy="904.500" r="11.500"/>
      </g>
      <g class="cad-t" text-anchor="middle">
        <text x="567.500" y="180" textLength="21" lengthAdjust="spacingAndGlyphs">AR</text><text x="567.500" y="229" textLength="22" lengthAdjust="spacingAndGlyphs">AQ</text><text x="567.500" y="278" textLength="21" lengthAdjust="spacingAndGlyphs">AP</text><text x="567.500" y="326" textLength="21" lengthAdjust="spacingAndGlyphs">AN</text><text x="567.500" y="375" textLength="23" lengthAdjust="spacingAndGlyphs">AM</text><text x="567.500" y="424" textLength="21" lengthAdjust="spacingAndGlyphs">AL</text><text x="567.500" y="473" textLength="21" lengthAdjust="spacingAndGlyphs">AK</text><text x="567.500" y="522" textLength="20" lengthAdjust="spacingAndGlyphs">AJ</text><text x="567.500" y="571" textLength="21" lengthAdjust="spacingAndGlyphs">AH</text><text x="567.500" y="620" textLength="22" lengthAdjust="spacingAndGlyphs">AG</text><text x="567.500" y="668" textLength="20" lengthAdjust="spacingAndGlyphs">AF</text><text x="567.500" y="717" textLength="20" lengthAdjust="spacingAndGlyphs">AE</text><text x="567.500" y="766" textLength="21" lengthAdjust="spacingAndGlyphs">AD</text><text x="567.500" y="814" textLength="21" lengthAdjust="spacingAndGlyphs">AC</text><text x="567.500" y="863" textLength="21" lengthAdjust="spacingAndGlyphs">AB</text><text x="567.500" y="911" textLength="21" lengthAdjust="spacingAndGlyphs">AA</text>
      </g>
      <path d="M818 607.500l4.500 9h-9z" fill="none" stroke="#ffff33" stroke-width="1.500" shape-rendering="auto"/>
      <path d="M601.500 912.500l3.500 5 3.500-5M605 917.500V925" fill="none" stroke="#00e020" stroke-width="1.300" shape-rendering="auto"/>
      <path d="M605 925l5 12h-10z" fill="#00e020" shape-rendering="auto"/>
    </svg>
  </div>
</div>

<svg class="over" viewBox="0 0 990 937" xmlns="http://www.w3.org/2000/svg" fill="#ee22ee">
  <polygon points="749.500,220.800 750.500,221.200 801.900,92.700 805.700,94.100 803,75 788.700,87.900 792.500,89.300"/>
  <polygon points="380.300,371.700 379.700,372.300 186.900,226.700 182.600,232.200 172,210 196.200,214.800 191.900,220.300"/>
  <polygon points="258,437.500 258,438.500 104.400,454.500 104.800,459 84,451 103.200,441 103.600,444.500"/>
  <polygon points="662.700,599.700 663.300,600.300 779.400,494.900 783.900,499.700 791,480 770.100,485.100 774.600,489.900"/>
  <polygon points="497.700,765.300 498.300,764.700 447.800,705.600 452.200,701.500 432,693.500 439,713.700 443.400,709.600"/>
</svg>
</body>
</html>
